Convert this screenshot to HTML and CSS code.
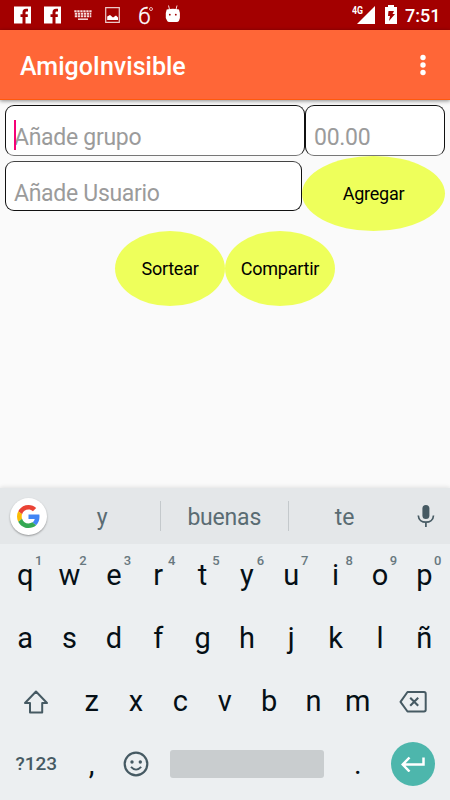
FILE: index.html
```
<!DOCTYPE html>
<html lang="es">
<head>
<meta charset="utf-8">
<title>AmigoInvisible</title>
<link rel="stylesheet" href="styles.css">
</head>
<body>
<header class="status">
  <div class="notifications">
    <svg width="17" height="18" viewBox="0 0 17 18"><path fill="#fff" d="M0 .5h17v17H11.500v-6.500h2.300V8.200h-2.300V6.500q0-1 1-1h1.500V2.700h-2q-3.500 0-3.500 3.500v2h-2v2.800h2v6.500H0z"/></svg>
    <svg width="17" height="18" viewBox="0 0 17 18"><path fill="#fff" d="M0 .5h17v17H11.500v-6.500h2.300V8.200h-2.300V6.500q0-1 1-1h1.500V2.700h-2q-3.500 0-3.500 3.500v2h-2v2.800h2v6.500H0z"/></svg>
    <svg class="n-keys" width="18" height="11" viewBox="0 0 18 11"><g stroke="#f7dcdc" stroke-width="2" fill="none"><path stroke-dasharray="2.300 .7" d="M.3 1.200h17.500M.8 6.200h16.500"/><path stroke-dasharray="2.300 .7" d="M.8 3.700h16.500"/><path stroke-width="1.500" d="M4 9.200h10"/></g></svg>
    <svg class="n-image" width="15" height="16" viewBox="0 0 15 16"><path fill="none" stroke="#eccaca" stroke-width="1.200" d="M.7.700h13.600v14.600H.7z"/><path fill="#fff" d="M2.200 13V9.500L5 8l3 2.500 3-2 2 2V13z"/></svg>
    <span class="temp">6<span class="degree"></span></span>
    <svg class="n-android" width="16" height="18" viewBox="0 0 16 18"><path stroke="#f5dada" stroke-width="1" d="M3.500 .5l1 4M12 .5l-1 4"/><path fill="#fff" d="M1.700 4.500Q8 2.800 14 4.500l.9 3.500v5l-.8 2.500Q13.500 17 11.500 17h-7q-2 0-2.500-1.500L.8 13V8z"/><circle cx="4.800" cy="9.700" r=".9" fill="#a30000"/><circle cx="10.800" cy="9.700" r=".9" fill="#a30000"/></svg>
  </div>
  <div class="system">
    <span class="network">4G</span>
    <svg class="signal" width="18" height="18" viewBox="0 0 18 18"><path fill="#fff" d="M18 0v18H0z"/></svg>
    <svg class="battery" width="12" height="19" viewBox="0 0 12 19"><path fill="#fff" d="M3 0h6v2h3v17H0V2h3z"/><path fill="#a30000" d="M3.500 6H9L7.500 9H10L4 16l1-5H3z"/></svg>
    <span class="clock">7:51</span>
  </div>
</header>
<div class="appbar">
  <h1>AmigoInvisible</h1>
  <svg width="6" height="22" viewBox="0 0 6 22"><g fill="#fff"><circle cx="3" cy="3.500" r="2.700"/><circle cx="3" cy="11" r="2.700"/><circle cx="3" cy="18.500" r="2.700"/></g></svg>
</div>
<main>
  <div class="row">
    <div class="field group"><span class="hint">Añade grupo</span><i class="cursor"></i></div>
    <div class="field amount"><span class="hint">00.00</span></div>
  </div>
  <div class="row second">
    <div class="field user"><span class="hint">Añade Usuario</span></div>
    <button class="oval add">Agregar</button>
  </div>
  <div class="actions">
    <button class="oval">Sortear</button>
    <button class="oval">Compartir</button>
  </div>
</main>
<section class="keyboard">
  <div class="suggestions">
    <div class="google"><svg width="23" height="23" viewBox="0 0 48 48"><path fill="#EA4335" d="M24 9.500c3.540 0 6.710 1.220 9.210 3.600l6.850-6.850C35.900 2.380 30.470 0 24 0 14.620 0 6.510 5.380 2.560 13.220l7.980 6.190C12.430 13.720 17.740 9.500 24 9.500z"/><path fill="#4285F4" d="M46.980 24.550c0-1.570-.15-3.090-.38-4.550H24v9.020h12.940c-.58 2.960-2.260 5.480-4.780 7.180l7.730 6c4.510-4.180 7.090-10.360 7.090-17.650z"/><path fill="#FBBC05" d="M10.530 28.590c-.48-1.450-.76-2.990-.76-4.590s.27-3.140.76-4.590l-7.980-6.190C.92 16.460 0 20.120 0 24s.92 7.540 2.560 10.780z"/><path fill="#34A853" d="M24 48c6.480 0 11.930-2.130 15.890-5.810l-7.730-6c-2.150 1.450-4.920 2.300-8.160 2.300-6.260 0-11.570-4.220-13.470-9.910l-7.980 6.190C6.510 42.620 14.620 48 24 48z"/></svg></div>
    <span class="word">y</span><span class="word">buenas</span><span class="word last">te</span>
    <svg class="mic" width="18" height="24" viewBox="0 0 18 24"><rect x="5.400" y="1" width="7" height="14" rx="3.500" fill="#465a63"/><path fill="none" stroke="#465a63" stroke-width="1.700" d="M1.300 11.500C1.500 16 5 18.200 8.900 18.200s7.400-2.200 7.600-6.700M8.900 18v5"/></svg>
  </div>
  <div class="keys">
    <span>q<sup>1</sup></span><span>w<sup>2</sup></span><span>e<sup>3</sup></span><span>r<sup>4</sup></span><span>t<sup>5</sup></span><span>y<sup>6</sup></span><span>u<sup>7</sup></span><span>i<sup>8</sup></span><span>o<sup>9</sup></span><span>p<sup>0</sup></span>
  </div>
  <div class="keys">
    <span>a</span><span>s</span><span>d</span><span>f</span><span>g</span><span>h</span><span>j</span><span>k</span><span>l</span><span>ñ</span>
  </div>
  <div class="keys letters">
    <span><svg width="26" height="26" viewBox="0 0 26 26"><path fill="none" stroke="#465a63" stroke-width="2" stroke-linejoin="round" d="M13 2.500L24 14h-4.800v9.500H7V14H2z"/></svg></span>
    <span>z</span><span>x</span><span>c</span><span>v</span><span>b</span><span>n</span><span>m</span>
    <span><svg class="erase" width="28" height="22" viewBox="0 0 28 22"><path fill="none" stroke="#465a63" stroke-width="2" stroke-linejoin="round" d="M8.500 1h16.500q1.700 0 1.700 1.700v16.100q0 1.700-1.700 1.700H8.500L1.500 10.800z"/><path stroke="#465a63" stroke-width="2.100" d="M11.200 6.800l8 8M19.200 6.800l-8 8"/></svg></span>
  </div>
  <div class="keys bottom">
    <span class="symbols">?123</span><span>,</span>
    <span><svg width="26" height="26" viewBox="0 0 26 26"><circle cx="13" cy="13" r="11.300" fill="none" stroke="#465a63" stroke-width="2.200"/><circle cx="9" cy="11" r="1.700" fill="#465a63"/><circle cx="17.300" cy="11" r="1.700" fill="#465a63"/><path fill="none" stroke="#465a63" stroke-width="1.900" d="M8 15.800q5 5.600 10.200 0"/></svg></span>
    <span class="space"></span><span>.</span>
    <span><i class="enter"><svg width="24" height="16" viewBox="0 0 24 16"><path fill="none" stroke="#fff" stroke-width="2.500" d="M22.500 1.500v7H2M8.500 1.500L1.700 8.500l6.800 7"/></svg></i></span>
  </div>
</section>
</body>
</html>
```
FILE: styles.css
```
* { box-sizing: border-box; }
body {
  margin: 0;
  width: 450px;
  height: 800px;
  overflow: hidden;
  display: flex;
  flex-direction: column;
  background: #fafafa;
  font-family: Roboto, "Liberation Sans", sans-serif;
}
svg { display: block; flex: none; }

.status {
  height: 30px;
  flex: none;
  background: #a30000;
  color: #fff;
  display: flex;
  justify-content: space-between;
  padding: 0 11px 0 14px;
}
.notifications, .system { display: flex; align-items: flex-start; padding-top: 6px; }
.notifications { gap: 13px; }
.n-keys { margin-top: 4px; }
.n-image { margin: 1px 0 0 0; }
.temp {
  position: relative;
  width: 15px;
  margin: -2px 0 0 5px;
  font-size: 23px;
  font-weight: 300;
  line-height: 25px;
  -webkit-text-stroke: .3px #fff;
}
.degree {
  position: absolute;
  left: 11px;
  top: 3px;
  width: 4px;
  height: 4px;
  border: 1px solid #e9baba;
  border-radius: 50%;
}
.n-android { margin: -1px 0 0 -1px; }
.network {
  width: 14px;
  margin-right: -9px;
  font-size: 11px;
  font-weight: 700;
  line-height: 9px;
  transform: scaleX(.8);
  transform-origin: left;
}
.signal { margin-right: 10px; }
.battery { margin: -1px 8px 0 0; }
.clock { font-size: 18px; font-weight: 500; line-height: 20px; width: 34px; white-space: nowrap; }

.appbar {
  height: 70px;
  flex: none;
  display: flex;
  align-items: center;
  justify-content: space-between;
  padding: 1px 24px 0 20px;
  background: #ff6637;
  border-bottom: 1px solid #ff590d;
  box-shadow: 0 1px 4px rgba(0, 0, 0, .45);
}
.appbar svg { margin-top: -1px; }
h1 { margin: 4px 0 0; color: #fff; font-size: 25px; font-weight: 500; line-height: 32px; }

main { flex: 1; padding: 5px 5px 0; }
.row { display: flex; height: 51px; }
.second { height: 74px; }
.field {
  position: relative;
  height: 51px;
  border: 1px solid #111;
  border-radius: 9px;
  background: #fff;
  padding: 16px 0 0 8px;
  font-size: 23px;
  letter-spacing: -.3px;
  line-height: 31px;
  color: #9b9b9b;
}
.group { width: 300px; }
.amount { width: 140px; }
.user { width: 297px; height: 50px; margin-top: 5px; border-top-color: #444; }
.group, .amount { border-bottom-color: #777; }
.cursor { position: absolute; left: 8px; top: 14px; width: 2px; height: 30px; background: #f50076; }
.oval {
  width: 110px;
  height: 75px;
  padding: 0;
  border: 0;
  border-radius: 50%;
  background: #eeff5b;
  color: #000;
  font: 400 18px Roboto, sans-serif;
  letter-spacing: -.25px;
}
.add { width: 143px; }
.actions { display: flex; justify-content: center; padding-top: 1px; }

.keyboard { height: 312px; flex: none; background: #eceff1; box-shadow: 0 -1px 4px rgba(0, 0, 0, .1); }
.suggestions { height: 56px; background: #e4e7e9; display: flex; align-items: center; color: #5a6c73; }
.google {
  width: 37px;
  height: 37px;
  margin: 0 -3px 0 10px;
  flex: none;
  border-radius: 50%;
  background: #fff;
  display: flex;
  align-items: center;
  justify-content: center;
  box-shadow: 0 1px 2px rgba(0, 0, 0, .35);
}
.word {
  width: 127.500px;
  height: 30px;
  padding-top: 2px;
  line-height: 30px;
  font-size: 23px;
  letter-spacing: -.2px;
  text-align: center;
  border-right: 1px solid #c4c9cc;
}
.word:first-of-type { width: 117px; }
.word.last { width: 112px; border: 0; }
.mic { margin-left: 16px; }
.keys {
  height: 63px;
  padding: 0 3.500px 0 3px;
  display: grid;
  grid-template-columns: repeat(10, 1fr);
  font-size: 29px;
  color: #050f16;
}
.keys span { position: relative; display: flex; align-items: center; justify-content: center; padding-bottom: 2px; }
.keys sup {
  position: absolute;
  right: 5px;
  top: 8px;
  font-size: 13px;
  line-height: 18px;
  font-weight: 500;
  color: #68787f;
}
.letters { grid-template-columns: 1.500fr repeat(7, 1fr) 1.500fr; }
.letters svg { margin-top: 3px; }
.bottom { grid-template-columns: 1.500fr 1fr 1fr 4fr 1fr 1.500fr; }
.keys .symbols { font-size: 19px; font-weight: 500; color: #465a63; }
.keys .space { height: 28px; margin: 17px 12px; border-radius: 3px; background: #c9cdcf; }
.enter {
  width: 44px;
  height: 44px;
  border-radius: 50%;
  background: #4db6ac;
  display: flex;
  align-items: center;
  justify-content: center;
}
```
